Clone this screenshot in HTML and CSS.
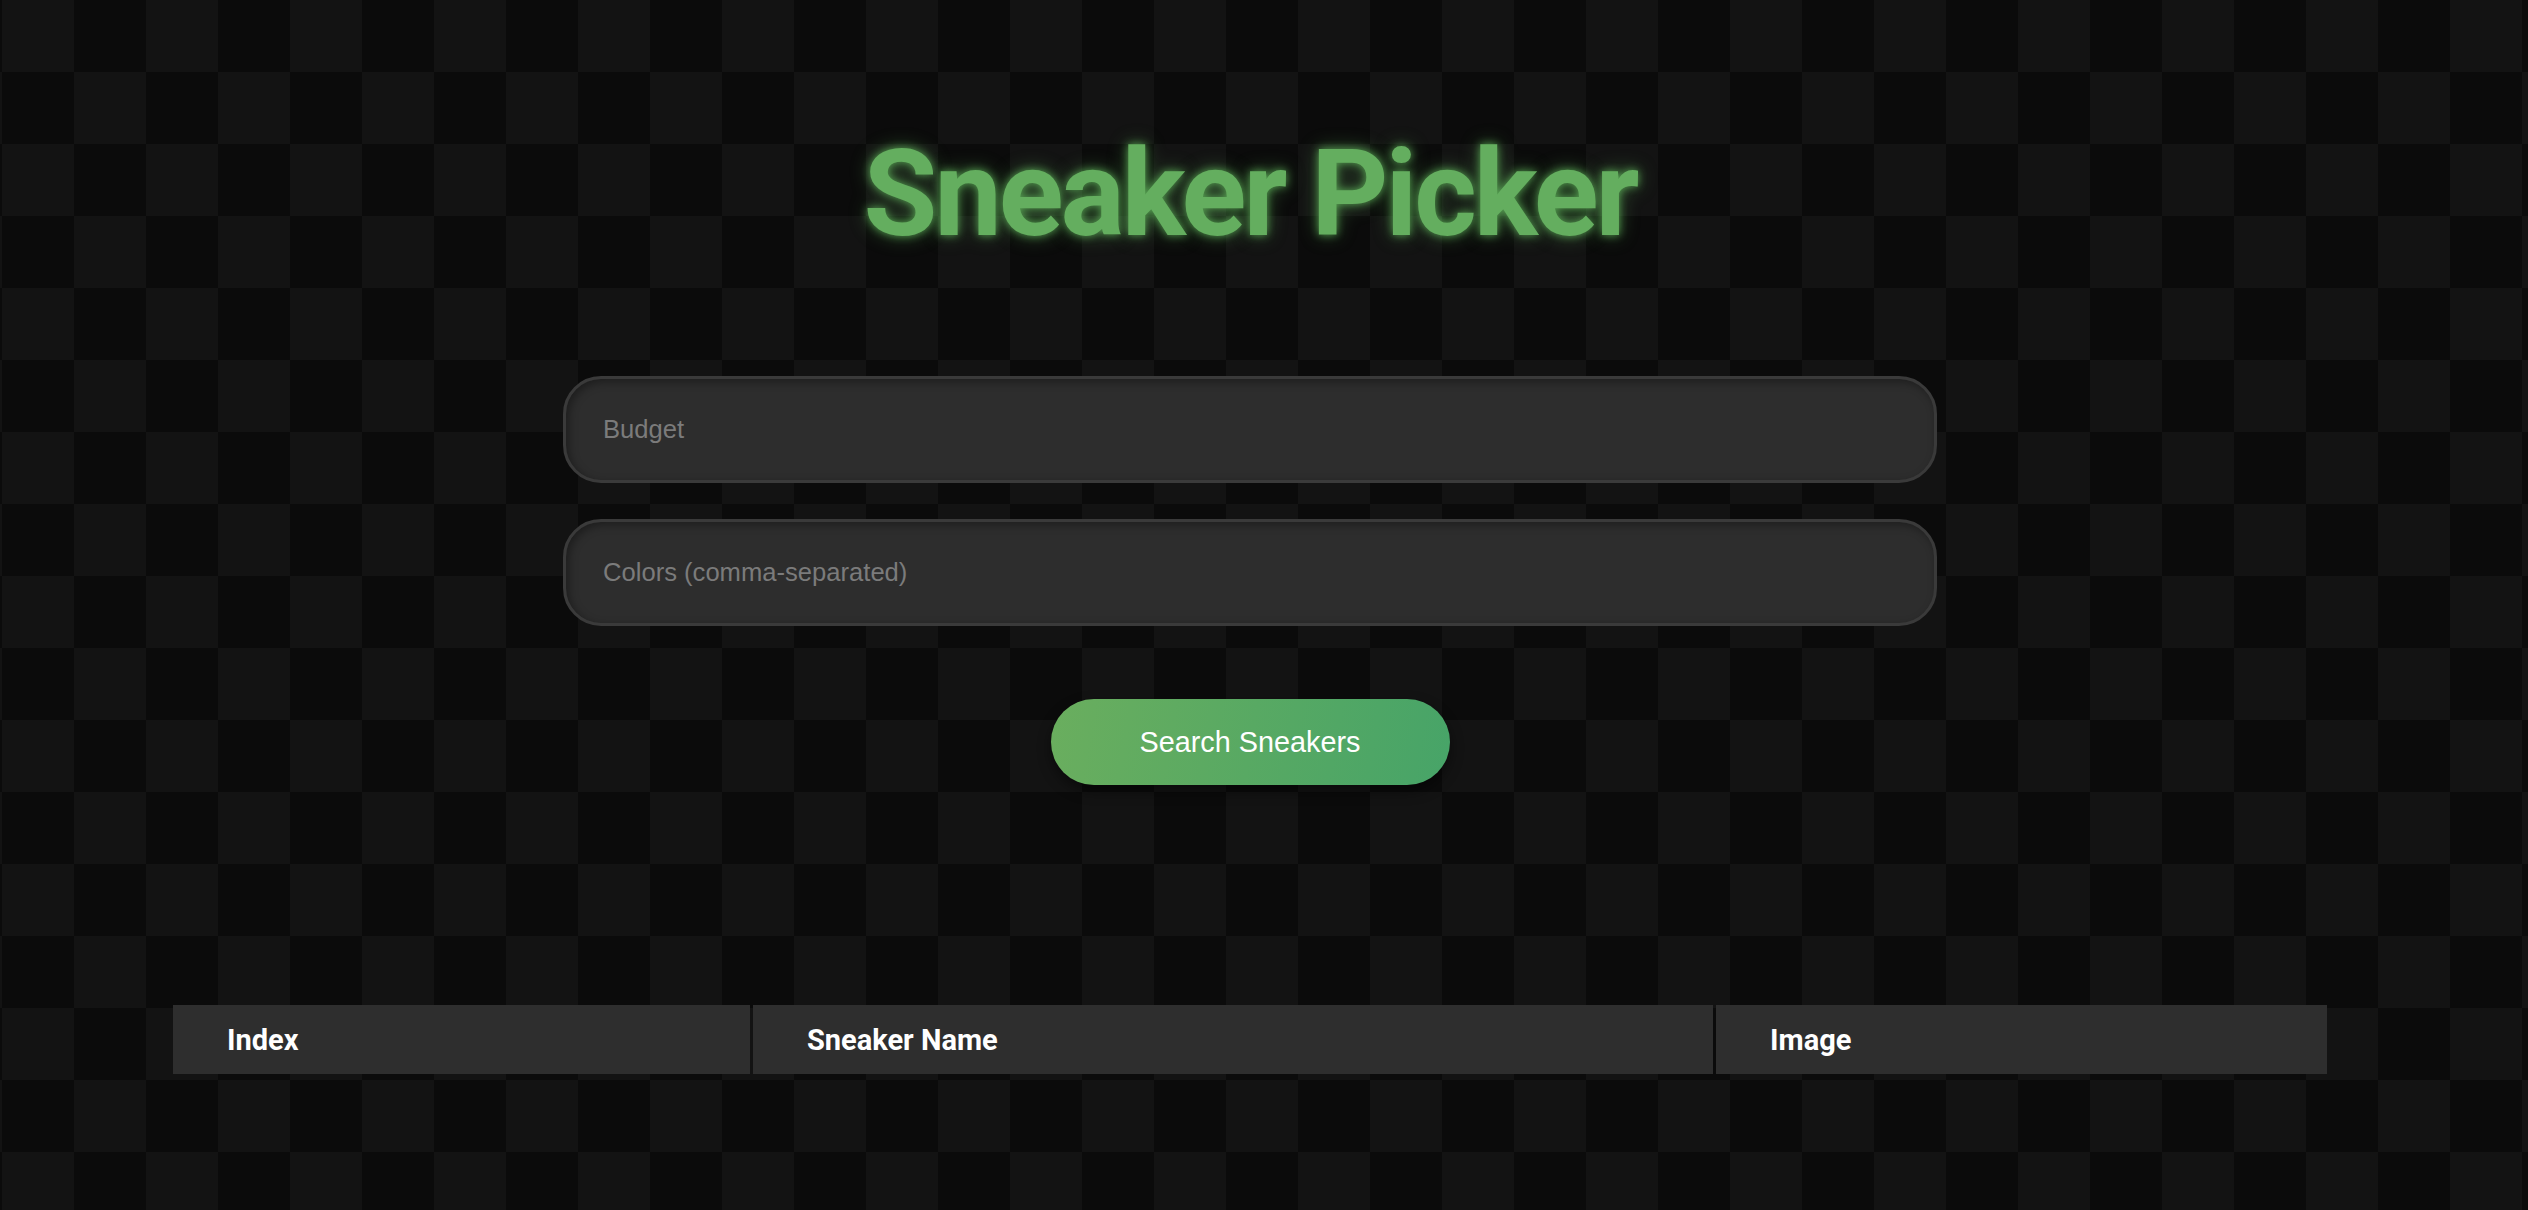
FILE: index.html
```html
<!DOCTYPE html>
<html lang="en">
<head>
<meta charset="utf-8">
<title>Sneaker Picker</title>
<link rel="stylesheet" href="styles.css">
</head>
<body>
<main class="page">
  <h1 class="title">Sneaker Picker</h1>
  <form class="search-form">
    <input class="field" type="text" placeholder="Budget">
    <input class="field" type="text" placeholder="Colors (comma-separated)">
    <button class="search-btn" type="button">Search Sneakers</button>
  </form>
  <table class="results">
    <thead>
      <tr>
        <th class="col-index">Index</th>
        <th class="col-name">Sneaker Name</th>
        <th class="col-image">Image</th>
      </tr>
    </thead>
    <tbody></tbody>
  </table>
</main>
</body>
</html>
```

FILE: styles.css
```css
html, body {
  margin: 0;
  padding: 0;
}

body {
  min-height: 100vh;
  background-color: #0b0b0b;
  background-image: conic-gradient(#0b0b0b 0 25%, #131313 0 50%, #0b0b0b 0 75%, #131313 0);
  background-size: 144px 144px;
  background-position: 2px 0;
  font-family: Roboto, "Liberation Sans", Arial, sans-serif;
  color: #fff;
}

.page {
  width: 2500px;
  display: flex;
  flex-direction: column;
  align-items: center;
  padding-top: 122px;
}

.title {
  margin: 0;
  font-size: 120px;
  line-height: 144px;
  font-weight: 700;
  letter-spacing: -3px;
  color: #64ae5f;
  text-shadow: 0 0 8px rgba(100, 190, 95, 0.8), 0 0 20px rgba(100, 190, 95, 0.4);
}

.search-form {
  margin-top: 110px;
  display: flex;
  flex-direction: column;
  align-items: center;
  gap: 36px;
}

.field {
  box-sizing: border-box;
  width: 1374px;
  height: 107px;
  padding: 0 37px;
  border: 3px solid #3a3a3a;
  border-radius: 38px;
  background: #2d2d2d;
  box-shadow: inset 3px 3px 8px rgba(0, 0, 0, 0.35);
  font-family: "Liberation Sans", Arial, sans-serif;
  font-size: 25.6px;
  color: #ddd;
  outline: none;
}

.field::placeholder {
  color: #7b7b7b;
}

.search-btn {
  margin-top: 37px;
  width: 399px;
  height: 86px;
  border: none;
  border-radius: 43px;
  background: linear-gradient(100deg, #6aae5e 0%, #58a963 50%, #47a468 100%);
  box-shadow: 0 6px 14px rgba(0, 0, 0, 0.45);
  font-family: "Liberation Sans", Arial, sans-serif;
  font-size: 28.8px;
  color: #fff;
  cursor: pointer;
}

.results {
  margin-top: 220px;
  width: 2160px;
  border-collapse: separate;
  border-spacing: 3px 0;
}

.results th {
  height: 69px;
  padding: 0 0 0 54px;
  background: #2e2e2e;
  text-align: left;
  font-size: 29px;
  font-weight: 700;
  color: #fff;
}

.col-index { width: 524px; }
.col-name { width: 908px; }
.col-image { width: 558px; }
```
